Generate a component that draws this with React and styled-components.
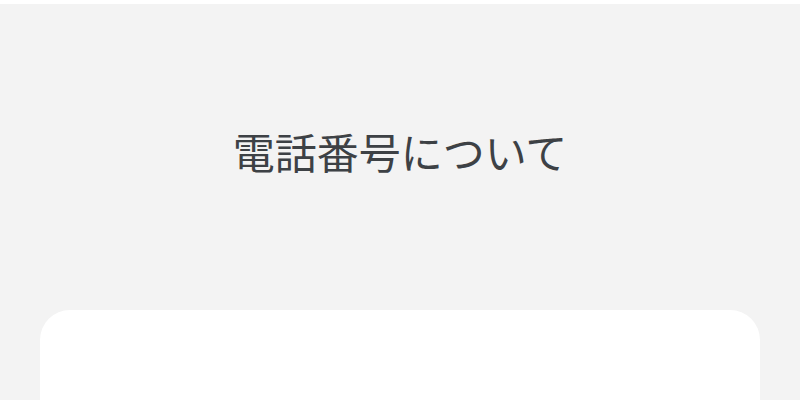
import styled, { createGlobalStyle } from 'styled-components';

const GlobalStyle = createGlobalStyle`
    body {
        margin: 0;
        background: #fff;
        font-family: "Noto Sans CJK JP", "Noto Sans", sans-serif;
    }
`

const Page = styled.div`
    padding-top: 4px;
`

const Section = styled.section`
    background: #f3f3f3;
    padding: 0 40px;
    min-height: 420px;
`

const Title = styled.h1`
    margin: 0;
    box-sizing: border-box;
    height: 306px;
    padding-bottom: 14px;
    display: flex;
    align-items: center;
    justify-content: center;
    font-size: 42px;
    font-weight: 400;
    color: #3d4145;
    letter-spacing: 0;
`

const Card = styled.div`
    background: #fff;
    border-radius: 30px;
    height: 200px;
`

const App = () => {
    return (
        <Page>
            <GlobalStyle/>
            <Section>
                <Title>電話番号について</Title>
                <Card/>
            </Section>
        </Page>
    )
}

export default App;
